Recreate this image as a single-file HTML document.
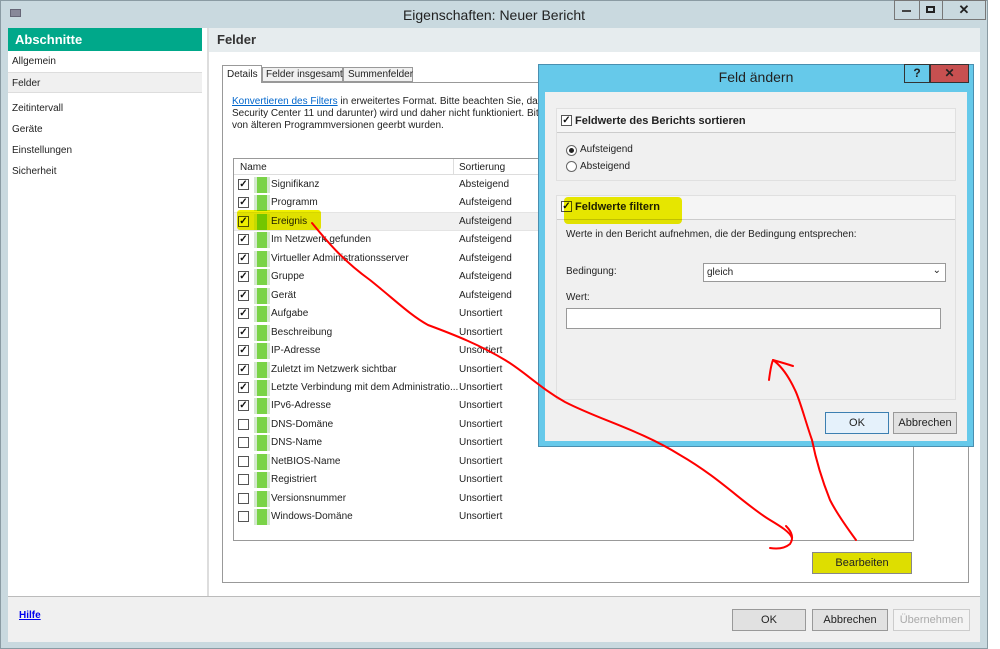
<!DOCTYPE html>
<html><head><meta charset="utf-8"><style>
*{margin:0;padding:0;box-sizing:border-box}
body{width:1000px;height:649px;overflow:hidden;background:#fff;font-family:"Liberation Sans",sans-serif;font-size:11px;color:#222;position:relative}
.a{position:absolute;white-space:nowrap}
.cb{position:absolute;width:11px;height:11px;border:1px solid #555;background:#fff;font-size:10px;line-height:9px;text-align:center;font-weight:bold;color:#111}
.ic{position:absolute;width:16px;height:16px;background:#7ad347;border-left:3px solid #d4e8d0;border-right:3px solid #d4e8d0}
.btn{position:absolute;height:22px;border:1px solid #999;background:#e1e1e1;text-align:center;line-height:20px;font-size:11px}
.hl{mix-blend-mode:multiply}
</style></head><body>
<div class="a" style="left:0;top:0;width:988px;height:649px;background:#c9d9df;border:1px solid #8a9ba3"></div>
<div class="a" style="left:10px;top:9px;width:11px;height:8px;background:#889;border:1px solid #667"></div>
<div class="a" style="left:0;top:7px;width:988px;text-align:center;font-size:14px;color:#222">Eigenschaften: Neuer Bericht</div>
<div class="a" style="left:894px;top:0;width:92px;height:20px;border:1px solid #777;background:#c9d9df"></div>
<div class="a" style="left:919px;top:0;width:1px;height:20px;background:#777"></div>
<div class="a" style="left:942px;top:0;width:1px;height:20px;background:#777"></div>
<div class="a" style="left:902px;top:10px;width:9px;height:2px;background:#444"></div>
<div class="a" style="left:926px;top:6px;width:9px;height:7px;border:2px solid #222"></div>
<div class="a" style="left:942px;top:2px;width:44px;text-align:center;font-weight:bold;font-size:13px">✕</div>
<div class="a" style="left:8px;top:28px;width:972px;height:614px;background:#fff"></div>
<div class="a" style="left:8px;top:28px;width:194px;height:23px;background:#00a88a;color:#fff;font-weight:bold;font-size:13px;padding:4px 7px">Abschnitte</div>
<div class="a" style="left:8px;top:51px;width:194px;height:21px;padding:5px 4px;font-size:10px">Allgemein</div>
<div class="a" style="left:8px;top:72px;width:194px;height:21px;padding:5px 4px;font-size:10px;background:#f0f0f0;border-top:1px solid #ddd;border-bottom:1px solid #ddd">Felder</div>
<div class="a" style="left:12px;top:98px;font-size:10px;line-height:21px">Zeitintervall<br>Geräte<br>Einstellungen<br>Sicherheit</div>
<div class="a" style="left:207px;top:28px;width:2px;height:568px;background:#ddd"></div>
<div class="a" style="left:209px;top:28px;width:771px;height:24px;background:#e6ecee;font-weight:bold;font-size:13px;color:#333;padding:4px 8px">Felder</div>
<div class="a" style="left:222px;top:82px;width:747px;height:501px;border:1px solid #999"></div>
<div class="a" style="left:222px;top:65px;width:40px;height:18px;border:1px solid #999;border-bottom:none;background:#fff;padding:3px 4px;font-size:10px">Details</div>
<div class="a" style="left:262px;top:67px;width:81px;height:15px;border:1px solid #999;background:#f0f0f0;padding:1px 3px;font-size:10px">Felder insgesamt</div>
<div class="a" style="left:343px;top:67px;width:70px;height:15px;border:1px solid #999;background:#f0f0f0;padding:1px 4px;font-size:10px">Summenfelder</div>
<div class="a" style="left:232px;top:96px;font-size:10px;line-height:12px;white-space:nowrap"><span style="color:#06c;text-decoration:underline">Konvertieren des Filters</span> in erweitertes Format. Bitte beachten Sie, dass d<br>Security Center 11 und darunter) wird und daher nicht funktioniert. Bitte<br>von älteren Programmversionen geerbt wurden.</div>
<div class="a" style="left:233px;top:158px;width:681px;height:383px;border:1px solid #999"></div>
<div class="a" style="left:234px;top:159px;width:680px;height:16px;border-bottom:1px solid #ddd"></div>
<div class="a" style="left:240px;top:162px;font-size:10px">Name</div>
<div class="a" style="left:453px;top:159px;width:1px;height:16px;background:#ddd"></div>
<div class="a" style="left:459px;top:162px;font-size:10px">Sortierung</div>
<div class="a" style="left:234px;top:212px;width:305px;height:19px;background:#f0f0f0;border-top:1px solid #e4e4e4;border-bottom:1px solid #e4e4e4"></div>
<div id="rows"></div>
<div class="a hl" style="left:237px;top:210px;width:84px;height:20px;background:#f0f000;border-radius:3px"></div>
<div class="btn" style="left:812px;top:552px;width:100px;background:#dede00;border-color:#888">Bearbeiten</div>
<div class="a" style="left:8px;top:596px;width:972px;height:46px;background:#f0f0f0;border-top:1px solid #bbb"></div>
<div class="a" style="left:19px;top:610px;color:#00e;font-weight:bold;text-decoration:underline;font-size:10px">Hilfe</div>
<div class="btn" style="left:732px;top:609px;width:74px">OK</div>
<div class="btn" style="left:812px;top:609px;width:76px">Abbrechen</div>
<div class="btn" style="left:893px;top:609px;width:77px;color:#aaa;border-color:#ccc;background:#f4f4f4">Übernehmen</div>
<div class="a" style="left:538px;top:64px;width:436px;height:383px;background:#66c9ea;border:1px solid #4a8fb0"></div>
<div class="a" style="left:538px;top:69px;width:436px;text-align:center;font-size:14px;color:#222">Feld ändern</div>
<div class="a" style="left:904px;top:64px;width:26px;height:19px;border:1px solid #333;text-align:center;font-weight:bold;font-size:12px;line-height:17px">?</div>
<div class="a" style="left:930px;top:64px;width:39px;height:19px;background:#c75050;border:1px solid #333;text-align:center;font-weight:bold;font-size:12px;line-height:17px">✕</div>
<div class="a" style="left:545px;top:92px;width:422px;height:349px;background:#f0f0f0"></div>
<div class="a" style="left:556px;top:108px;width:400px;height:73px;border:1px solid #e0e0e0;background:#f0f0f0"></div>
<div class="a" style="left:557px;top:109px;width:398px;height:24px;background:#f5f5f5;border-bottom:1px solid #ccc"></div>
<div class="cb" style="left:561px;top:115px">✓</div>
<div class="a" style="left:575px;top:115px;font-weight:bold;font-size:11px">Feldwerte des Berichts sortieren</div>
<div class="a" style="left:566px;top:145px;width:11px;height:11px;border:1px solid #666;border-radius:50%;background:#fff"><div style="margin:2px;width:5px;height:5px;border-radius:50%;background:#222"></div></div>
<div class="a" style="left:580px;top:144px;font-size:10px">Aufsteigend</div>
<div class="a" style="left:566px;top:161px;width:11px;height:11px;border:1px solid #666;border-radius:50%;background:#fff"></div>
<div class="a" style="left:580px;top:161px;font-size:10px">Absteigend</div>
<div class="a" style="left:556px;top:195px;width:400px;height:205px;border:1px solid #e0e0e0"></div>
<div class="a" style="left:557px;top:196px;width:398px;height:24px;background:#f5f5f5;border-bottom:1px solid #ccc"></div>
<div class="cb" style="left:561px;top:201px">✓</div>
<div class="a" style="left:575px;top:201px;font-weight:bold;font-size:11px">Feldwerte filtern</div>
<div class="a hl" style="left:564px;top:197px;width:118px;height:27px;background:#f0f000;border-radius:4px"></div>
<div class="a" style="left:566px;top:229px;font-size:10px">Werte in den Bericht aufnehmen, die der Bedingung entsprechen:</div>
<div class="a" style="left:566px;top:266px;font-size:10px">Bedingung:</div>
<div class="a" style="left:703px;top:263px;width:243px;height:19px;border:1px solid #999;background:#fff;padding:3px 3px;font-size:10px">gleich<span style="position:absolute;right:4px;top:1px;font-size:10px">⌄</span></div>
<div class="a" style="left:566px;top:292px;font-size:10px">Wert:</div>
<div class="a" style="left:566px;top:308px;width:375px;height:21px;border:1px solid #999;background:#fff"></div>
<div class="btn" style="left:825px;top:412px;width:64px;border-color:#3c7fb1;background:#e5f1fb">OK</div>
<div class="btn" style="left:893px;top:412px;width:64px">Abbrechen</div>
<svg class="a" style="left:0;top:0" width="1000" height="649"><g fill="none" stroke="#f00" stroke-width="2" stroke-linecap="round">
<path d="M312 223 C330 245 345 262 370 280 C395 300 410 315 428 325 C455 335 480 345 505 360 C525 372 540 388 565 402 C600 420 640 430 680 455 C720 478 745 505 770 520 C780 526 790 532 792 538"/>
<path d="M786 526 C792 532 794 538 790 544 C784 549 776 549 770 548"/>
<path d="M856 540 C845 525 835 510 830 500 C820 475 815 455 812 440 C805 420 800 400 795 390 C788 375 780 365 773 360"/>
<path d="M773 360 C771 365 770 372 769 380 M773 360 C780 362 787 364 793 366"/>
</g></svg>
<script>
var R=[["Signifikanz","Absteigend",1],["Programm","Aufsteigend",1],["Ereignis","Aufsteigend",1],["Im Netzwerk gefunden","Aufsteigend",1],["Virtueller Administrationsserver","Aufsteigend",1],["Gruppe","Aufsteigend",1],["Gerät","Aufsteigend",1],["Aufgabe","Unsortiert",1],["Beschreibung","Unsortiert",1],["IP-Adresse","Unsortiert",1],["Zuletzt im Netzwerk sichtbar","Unsortiert",1],["Letzte Verbindung mit dem Administratio...","Unsortiert",1],["IPv6-Adresse","Unsortiert",1],["DNS-Domäne","Unsortiert",0],["DNS-Name","Unsortiert",0],["NetBIOS-Name","Unsortiert",0],["Registriert","Unsortiert",0],["Versionsnummer","Unsortiert",0],["Windows-Domäne","Unsortiert",0]];
var h="";R.forEach(function(r,i){var y=178+i*18.45;h+='<div class="cb" style="left:238px;top:'+(y+1)+'px">'+(r[2]?'✓':'')+'</div><div class="ic" style="left:254px;top:'+(y-1)+'px"></div><div class="a" style="left:271px;top:'+(y+1)+'px;font-size:10px">'+r[0]+'</div><div class="a" style="left:459px;top:'+(y+1)+'px;font-size:10px">'+r[1]+'</div>';});
document.getElementById("rows").innerHTML=h;
</script>
</body></html>
